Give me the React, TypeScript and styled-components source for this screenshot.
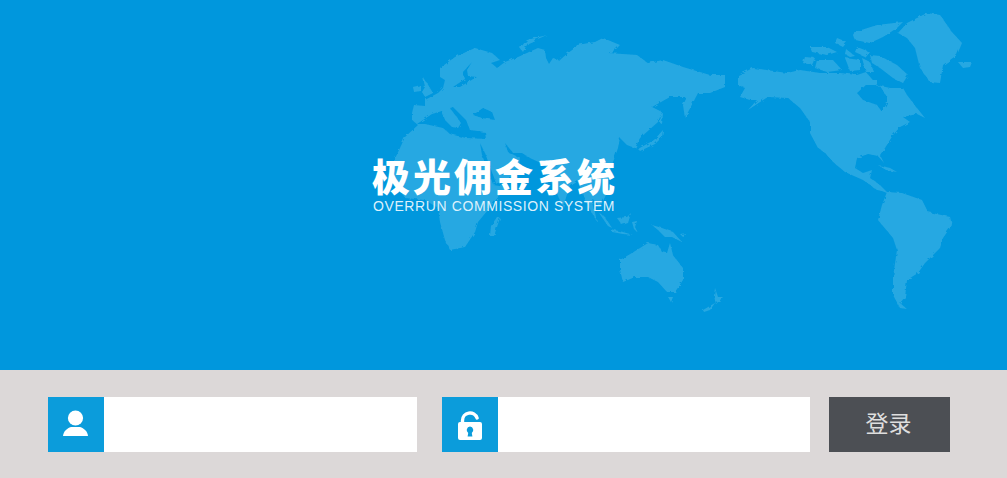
import styled, { createGlobalStyle } from 'styled-components';

const GlobalStyle = createGlobalStyle`
  html, body {
    margin: 0;
    padding: 0;
    background: #dcd8d8;
  }
`;

const Page = styled.div`
  width: 1007px;
  height: 478px;
  overflow: hidden;
  font-family: "Liberation Sans", "Noto Sans CJK SC", sans-serif;
`;

const Hero = styled.header`
  position: relative;
  height: 370px;
  box-sizing: border-box;
  padding: 152px 0 0 372px;
  background: #0097dd;
`;

const MapArt = styled.svg`
  position: absolute;
  top: 0;
  left: 0;
  width: 1007px;
  height: 370px;
`;

const Brand = styled.div`
  position: relative;
  width: 250px;
`;

const Title = styled.h1`
  margin: 0;
  font-family: "Noto Sans CJK SC", sans-serif;
  font-size: 38px;
  font-weight: 900;
  line-height: 46px;
  letter-spacing: 3px;
  white-space: nowrap;
  color: #fff;
`;

const Subtitle = styled.p`
  margin: 0 0 0 1px;
  font-size: 14px;
  line-height: 16px;
  letter-spacing: 0.6px;
  white-space: nowrap;
  color: #dcf1fc;
`;

const LoginBar = styled.form`
  display: flex;
  height: 108px;
  box-sizing: border-box;
  padding: 27px 0 0 48px;
  background: #dcd8d8;
`;

const Field = styled.label<{ $width: number; $gap: number }>`
  display: flex;
  width: ${(p) => p.$width}px;
  height: 55px;
  margin-right: ${(p) => p.$gap}px;
  background: #fff;
`;

const IconBox = styled.span`
  display: flex;
  align-items: center;
  justify-content: center;
  flex: 0 0 56px;
  background: #0b9cdb;
`;

const Input = styled.input`
  flex: 1;
  min-width: 0;
  border: 0;
  outline: 0;
  padding: 0 12px;
  font-size: 16px;
  background: transparent;
`;

const Submit = styled.button`
  width: 121px;
  height: 55px;
  padding: 0 2px 6px 0;
  border: 0;
  background: #4c4f54;
  color: #dedede;
  font-family: "Noto Sans CJK SC", sans-serif;
  font-size: 23px;
  font-weight: 400;
  cursor: pointer;
`;

const UserGlyph = styled.svg`
  margin: 0 0 4px;
`;

const LockGlyph = styled.svg`
  margin: 2px 0 0;
`;

const land = [
  // eurasia + africa
  'M412,113 L414,105 L425,106 L425,100 L438,93 L443,88 L445,80 L440,77 L440,68 L455,57 L475,48 L492,53 L500,60 L491,63 L497,68 L505,62 L518,57 L538,48 L545,50 L546,58 L549,64 L553,58 L560,60 L568,53 L575,48 L577,45 L595,42 L603,38 L620,45 L615,50 L608,53 L637,55 L648,63 L663,60 L683,67 L710,75 L725,75 L725,87 L710,93 L698,93 L685,118 L683,105 L687,97 L670,97 L652,107 L662,112 L658,122 L640,138 L635,148 L627,145 L620,138 L618,148 L612,165 L608,180 L606,195 L600,207 L592,198 L597,222 L585,200 L577,180 L570,185 L563,207 L553,185 L545,165 L530,158 L520,155 L519,172 L505,180 L493,185 L506,187 L492,205 L478,222 L475,232 L465,247 L450,250 L445,240 L440,222 L438,208 L425,200 L405,198 L395,180 L392,165 L400,148 L405,137 L418,125 L412,120 Z',
  // north america
  'M738,75 L753,68 L787,73 L800,70 L820,73 L840,73 L857,75 L866,72 L877,85 L890,88 L903,88 L907,95 L917,108 L925,118 L917,114 L903,117 L910,122 L900,127 L893,135 L885,148 L880,155 L884,163 L878,156 L868,154 L857,158 L855,168 L863,173 L872,170 L870,178 L880,185 L887,192 L877,190 L863,180 L845,172 L833,162 L825,153 L818,148 L810,133 L810,122 L800,108 L788,98 L768,97 L763,100 L748,110 L757,100 L750,100 L740,97 L745,88 L738,85 Z',
  // south america
  'M887,192 L902,193 L922,200 L928,212 L950,217 L952,225 L943,238 L940,248 L925,263 L918,273 L907,280 L905,297 L900,303 L907,309 L900,308 L893,295 L893,277 L897,250 L893,238 L878,220 L882,205 Z',
  // central america tail, caribbean
  'M870,183 L883,189 L889,194 L880,190 Z',
  'M878,165 L890,168 L897,172 L886,170 Z',
  // greenland, iceland
  'M898,33 L907,23 L927,13 L940,15 L952,32 L962,43 L957,55 L943,65 L940,83 L930,82 L920,68 L915,48 L907,38 Z',
  'M958,62 L972,62 L970,67 L963,68 Z',
  // arctic islands
  'M870,55 L880,56 L897,65 L908,75 L903,83 L893,78 L880,68 L872,63 Z',
  'M852,33 L877,25 L903,22 L897,28 L883,37 L870,43 L855,40 Z',
  'M837,38 L847,42 L843,47 L835,43 Z',
  'M857,47 L870,52 L866,57 L855,52 Z',
  'M846,49 L855,56 L850,57 L845,54 Z',
  'M817,60 L833,60 L842,70 L827,72 L815,68 Z',
  'M805,57 L815,58 L812,65 L803,63 Z',
  'M810,47 L827,47 L837,52 L827,55 L812,52 Z',
  'M845,58 L860,60 L860,70 L850,71 Z',
  'M862,58 L870,62 L874,72 L866,72 Z',
  'M868,80 L877,80 L877,84 L870,84 Z',
  // uk, ireland
  'M423,77 L427,83 L433,93 L425,97 L422,92 L425,87 Z',
  'M413,87 L421,85 L421,91 L414,92 Z',
  // novaya zemlya
  'M520,48 L527,40 L547,35 L528,43 L523,52 Z',
  // japan, sakhalin
  'M663,113 L662,124 L660,123 L661,114 Z',
  'M663,130 L662,137 L655,144 L640,151 L638,149 L654,140 Z',
  // indonesia, new guinea
  'M599,213 L605,217 L612,228 L608,226 Z',
  'M617,218 L627,217 L631,213 L628,223 L622,225 Z',
  'M610,229 L623,232 L633,235 L623,234 L612,232 Z',
  'M632,222 L637,221 L635,227 L638,233 L634,229 Z',
  'M652,225 L662,228 L673,232 L682,242 L672,237 L665,237 L658,230 Z',
  'M680,234 L687,233 L682,236 Z',
  // australia, tasmania, new zealand
  'M620,260 L632,253 L648,243 L658,245 L662,252 L667,253 L670,243 L673,255 L683,268 L683,280 L675,292 L667,292 L658,282 L648,277 L635,277 L623,282 L620,270 Z',
  'M668,297 L673,297 L671,302 Z',
  'M715,288 L718,297 L723,297 L716,304 L714,296 Z',
  'M703,310 L715,303 L710,310 L704,312 Z',
  // madagascar
  'M497,217 L500,218 L494,236 L490,236 L491,226 Z',
];

const seas = [
  // mediterranean
  'M417,124 L432,114 L442,111 L445,120 L452,127 L458,128 L461,123 L450,108 L453,107 L466,120 L470,130 L485,132 L486,139 L466,138 L450,134 L443,128 L425,124 Z',
  // black sea
  'M473,115 L483,108 L492,112 L495,120 L482,118 Z',
  // baltic
  'M472,62 L463,72 L465,79 L453,87 L460,87 L468,82 L477,77 L468,76 L467,70 Z',
  // red sea, persian gulf
  'M480,143 L485,153 L496,183 L493,184 L482,155 Z',
  'M505,143 L513,153 L522,153 L530,158 L518,157 L508,152 Z',
  // hudson bay, foxe
  'M857,93 L867,84 L880,86 L887,97 L887,103 L882,112 L877,105 L863,100 Z',
  // gulf of california
  'M825,153 L835,165 L833,166 L823,155 Z',
];

const UserIcon = () => (
  <UserGlyph width="28" height="28" viewBox="0 0 28 28" aria-hidden="true">
    <circle cx="13.5" cy="9" r="7.6" fill="#fff" />
    <path d="M1 27 C1.5 22 5 19.5 9 18 L18 18 C22 19.5 25.5 22 26 27 Z" fill="#fff" />
  </UserGlyph>
);

const LockIcon = () => (
  <LockGlyph width="26" height="30" viewBox="0 0 26 30" aria-hidden="true">
    <path d="M5.5 12 V9.5 A7.5 7.5 0 0 1 20.07 7" fill="none" stroke="#fff" strokeWidth="3.4" strokeLinecap="round" />
    <path
      fillRule="evenodd"
      d="M3 11 H23 A2 2 0 0 1 25 13 V27 A2 2 0 0 1 23 29 H3 A2 2 0 0 1 1 27 V13 A2 2 0 0 1 3 11 Z M13 15.5 A3.6 3.6 0 0 0 11.2 22 L10.6 25.5 H15.4 L14.8 22 A3.6 3.6 0 0 0 13 15.5 Z"
      fill="#fff"
    />
  </LockGlyph>
);

export default function App() {
  return (
    <Page>
      <GlobalStyle />
      <Hero>
        <MapArt viewBox="0 0 1007 370" aria-hidden="true">
          <defs>
            <filter id="coast" x="0" y="0" width="1007" height="370" filterUnits="userSpaceOnUse">
              <feTurbulence type="fractalNoise" baseFrequency="0.22" numOctaves="2" seed="4" result="noise" />
              <feDisplacementMap in="SourceGraphic" in2="noise" scale="3.5" />
              <feGaussianBlur stdDeviation="0.55" />
            </filter>
          </defs>
          <g filter="url(#coast)">
            {land.map((d) => (
              <path key={d} d={d} fill="#27a8e2" />
            ))}
            {seas.map((d) => (
              <path key={d} d={d} fill="#0097dd" />
            ))}
          </g>
        </MapArt>
        <Brand>
          <Title>极光佣金系统</Title>
          <Subtitle>OVERRUN COMMISSION SYSTEM</Subtitle>
        </Brand>
      </Hero>
      <LoginBar onSubmit={(e) => e.preventDefault()}>
        <Field $width={369} $gap={25}>
          <IconBox>
            <UserIcon />
          </IconBox>
          <Input type="text" />
        </Field>
        <Field $width={368} $gap={19}>
          <IconBox>
            <LockIcon />
          </IconBox>
          <Input type="password" />
        </Field>
        <Submit type="submit">登录</Submit>
      </LoginBar>
    </Page>
  );
}
